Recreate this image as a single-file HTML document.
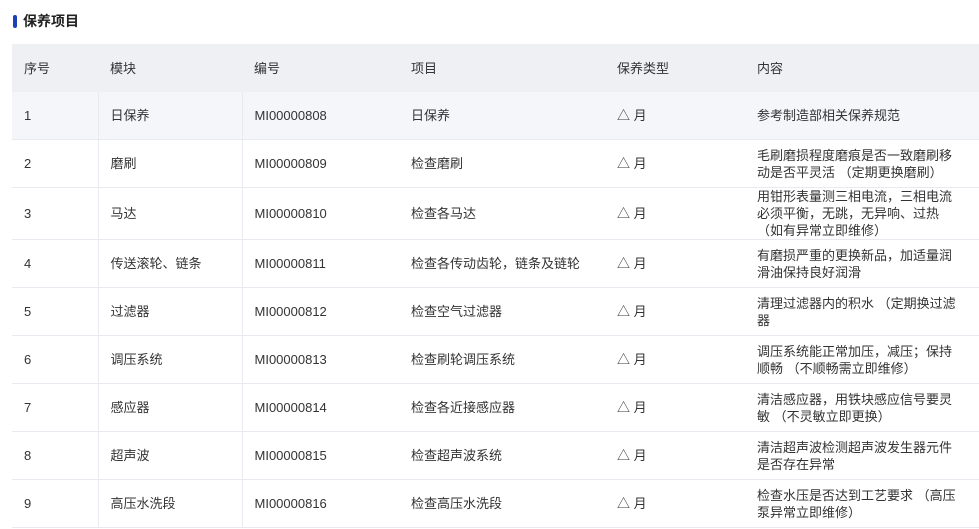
<!DOCTYPE html>
<html><head><meta charset="utf-8"><style>
body{margin:0;background:#fff;font-family:"Liberation Sans","Noto Sans CJK SC",sans-serif;color:#333;font-size:13px;width:979px;height:529px;overflow:hidden;position:relative}
.t{position:absolute;left:13px;top:12px;font-weight:bold;font-size:14px;color:#222;padding-left:10px;line-height:18px}
.t:before{content:"";position:absolute;left:0;top:3px;width:4px;height:13px;background:#1f3fb5;border-radius:2px}
table{position:absolute;left:12px;top:44px;width:967px;border-collapse:collapse;table-layout:fixed}
td,th{padding:0 0 0 12px;text-align:left;font-weight:normal;line-height:17px;border-bottom:1px solid #e8eaf0;vertical-align:middle}
th{background:#eff0f4;height:48px;border-bottom:none}
tr.h td{background:#f5f6fa}
td:nth-child(1),td:nth-child(2){border-right:1px solid #e8eaf0}
td{height:47px}
td.c{padding-right:20px}
</style></head><body>
<div class="t">保养项目</div>
<table>
<colgroup><col style="width:86px"><col style="width:144px"><col style="width:157px"><col style="width:206px"><col style="width:140px"><col></colgroup>
<tr><th>序号</th><th>模块</th><th>编号</th><th>项目</th><th>保养类型</th><th>内容</th></tr>
<tr class="h"><td>1</td><td>日保养</td><td>MI00000808</td><td>日保养</td><td>△ 月</td><td class="c">参考制造部相关保养规范</td></tr>
<tr><td>2</td><td>磨刷</td><td>MI00000809</td><td>检查磨刷</td><td>△ 月</td><td class="c">毛刷磨损程度磨痕是否一致磨刷移动是否平灵活 （定期更换磨刷）</td></tr>
<tr><td style="height:51px">3</td><td>马达</td><td>MI00000810</td><td>检查各马达</td><td>△ 月</td><td class="c">用钳形表量测三相电流，三相电流必须平衡，无跳，无异响、过热 （如有异常立即维修）</td></tr>
<tr><td>4</td><td>传送滚轮、链条</td><td>MI00000811</td><td>检查各传动齿轮，链条及链轮</td><td>△ 月</td><td class="c">有磨损严重的更换新品，加适量润滑油保持良好润滑</td></tr>
<tr><td>5</td><td>过滤器</td><td>MI00000812</td><td>检查空气过滤器</td><td>△ 月</td><td class="c">清理过滤器内的积水 （定期换过滤器</td></tr>
<tr><td>6</td><td>调压系统</td><td>MI00000813</td><td>检查刷轮调压系统</td><td>△ 月</td><td class="c">调压系统能正常加压，减压；保持顺畅 （不顺畅需立即维修）</td></tr>
<tr><td>7</td><td>感应器</td><td>MI00000814</td><td>检查各近接感应器</td><td>△ 月</td><td class="c">清洁感应器，用铁块感应信号要灵敏 （不灵敏立即更换）</td></tr>
<tr><td>8</td><td>超声波</td><td>MI00000815</td><td>检查超声波系统</td><td>△ 月</td><td class="c">清洁超声波检测超声波发生器元件是否存在异常</td></tr>
<tr><td>9</td><td>高压水洗段</td><td>MI00000816</td><td>检查高压水洗段</td><td>△ 月</td><td class="c">检查水压是否达到工艺要求 （高压泵异常立即维修）</td></tr>
</table>
</body></html>
